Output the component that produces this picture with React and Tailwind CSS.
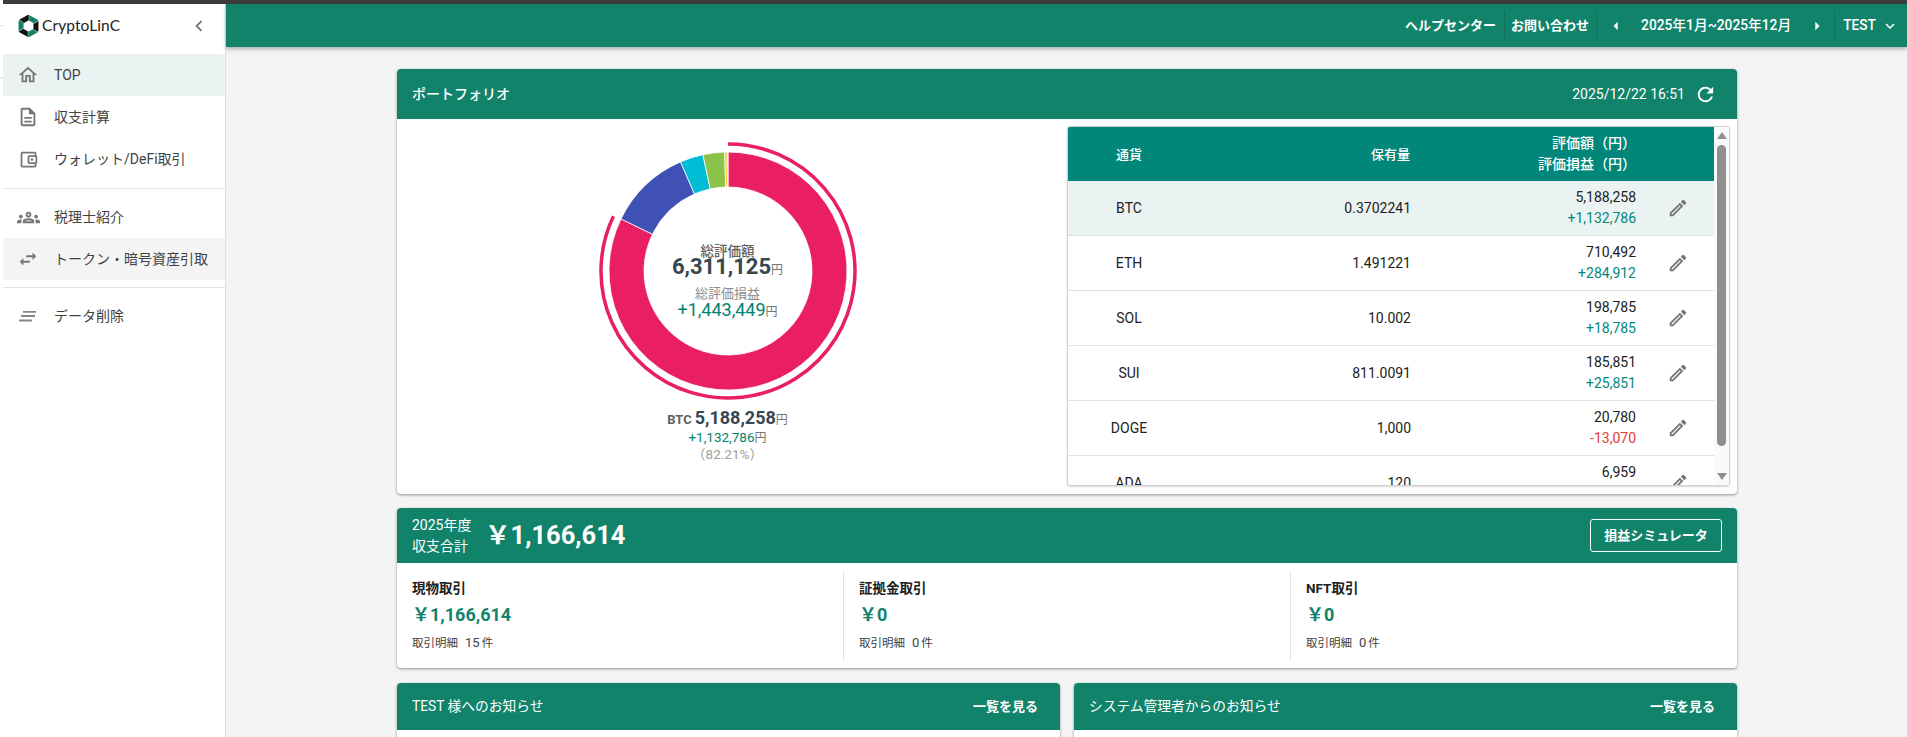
import React from "react";
import {
  MdOutlineHome, MdOutlineDescription, MdOutlineAccountBalanceWallet, MdOutlineGroups,
  MdSwapHoriz, MdOutlineEdit, MdRefresh, MdExpandMore, MdArrowLeft, MdArrowRight, MdChevronLeft,
} from "react-icons/md";

const FONT = "font-['Roboto','Noto_Sans_CJK_JP',sans-serif]";

function Logo() {
  const blade = "12.7,0.4 22,5.8 22,6.6 17.4,9.2 12,6 12.7,5.4";
  const blades = [
    [0, "#12836b"], [60, "#111111"], [120, "#12836b"],
    [180, "#111111"], [240, "#12836b"], [300, "#111111"],
  ];
  return (
    <svg width="23" height="24" viewBox="0 0 24 24" className="shrink-0">
      {blades.map(([r, c]) => (
        <polygon key={r} points={blade} fill={c} transform={`rotate(${r} 12 12)`} />
      ))}
    </svg>
  );
}

function SlantLines() {
  return (
    <svg width="24" height="24" viewBox="0 0 24 24" fill="none" stroke="#858585" strokeWidth="1.8">
      <path d="M7 7.8H20M5 12H19M3 16.5H16" />
    </svg>
  );
}

function NavItem({ icon, label, bg = "" }) {
  return (
    <div className={`flex h-[42px] items-center pl-[13px] text-[14px] text-[#424242] ${bg}`}>
      <span className="flex w-6 justify-center text-[#757575]">{icon}</span>
      <span className="ml-[14px] whitespace-nowrap">{label}</span>
    </div>
  );
}

function Sidebar() {
  return (
    <aside className="flex w-[223px] shrink-0 flex-col border-r border-[#e0e0e0] bg-white">
      <div className="flex h-[50px] items-center pb-[7px] pl-[14px] pr-[15px]">
        <Logo />
        <span className="ml-[2px] font-['Lato',sans-serif] text-[15.5px] tracking-[0.1px] text-[#222]">CryptoLinC</span>
        <MdChevronLeft className="ml-auto text-[#757575]" size={22} />
      </div>
      <NavItem icon={<MdOutlineHome size={22} />} label="TOP" bg="bg-[#ebf3f2]" />
      <NavItem icon={<MdOutlineDescription size={22} />} label="収支計算" />
      <NavItem icon={<MdOutlineAccountBalanceWallet size={21} />} label="ウォレット/DeFi取引" />
      <div className="mb-[7px] mt-2 h-px bg-[#e0e0e0]" />
      <NavItem icon={<MdOutlineGroups size={23} />} label="税理士紹介" />
      <NavItem icon={<MdSwapHoriz size={22} />} label="トークン・暗号資産引取" bg="bg-[#f4f4f4]" />
      <div className="mb-[7px] mt-[7px] h-px bg-[#e0e0e0]" />
      <NavItem icon={<SlantLines />} label="データ削除" />
    </aside>
  );
}

function HeaderDivider() {
  return <div className="h-[29px] w-px bg-[#0f705c]" />;
}

function TopBar() {
  return (
    <header className="relative z-10 flex h-[43px] shrink-0 items-center justify-end bg-[#12836b] text-[13px] text-white shadow-[0_2px_4px_rgba(0,0,0,0.3)]">
      <span className="mr-2 whitespace-nowrap font-bold">ヘルプセンター</span>
      <HeaderDivider />
      <span className="ml-[6px] mr-[7px] whitespace-nowrap font-bold">お問い合わせ</span>
      <HeaderDivider />
      <MdArrowLeft size={20} className="ml-[9px]" />
      <span className="ml-[15px] whitespace-nowrap text-[13.75px] font-medium">2025年1月~2025年12月</span>
      <MdArrowRight size={20} className="ml-[16px]" />
      <div className="ml-[7px]"><HeaderDivider /></div>
      <span className="ml-2 text-[13.75px] font-medium">TEST</span>
      <MdExpandMore size={18} className="ml-[5px] mr-[8px]" />
    </header>
  );
}

const segs = [
  ["#e91e63", 82.21], ["#3f51b5", 11.26], ["#00bcd4", 3.15], ["#8bc34a", 2.94],
  ["#ffc107", 0.33], ["#ff9800", 0.11],
];

function pt(r, pct) {
  const a = (pct / 100) * 2 * Math.PI;
  return [130 + r * Math.sin(a), 130 - r * Math.cos(a)];
}

function Donut() {
  let acc = 0;
  const R = 119, r = 84;
  const paths = segs.map(([c, v]) => {
    const s = acc, e = acc + v;
    acc = e;
    const large = v > 50 ? 1 : 0;
    const [x1, y1] = pt(R, s), [x2, y2] = pt(R, e), [x3, y3] = pt(r, e), [x4, y4] = pt(r, s);
    return (
      <path key={c} fill={c} stroke="#fff" strokeWidth="0.8"
        d={`M${x1} ${y1}A${R} ${R} 0 ${large} 1 ${x2} ${y2}L${x3} ${y3}A${r} ${r} 0 ${large} 0 ${x4} ${y4}Z`} />
    );
  });
  const [ax, ay] = pt(127, 82.1);
  const [bx, by] = pt(127, 0);
  return (
    <div className="relative h-[260px] w-[260px]">
      <svg width="260" height="260" viewBox="0 0 260 260">
        {paths}
        <path d={`M${bx} ${by}A127 127 0 1 1 ${ax} ${ay}`} fill="none" stroke="#e91e63" strokeWidth="3.5" />
      </svg>
      <div className="absolute inset-0 flex flex-col items-center pt-[103px] whitespace-nowrap">
        <div className="text-[13.5px] font-medium leading-[14px] text-[#616161]">総評価額</div>
        <div className="flex items-baseline leading-[18px]">
          <span className="text-[22px] font-bold text-[#37474f]">6,311,125</span>
          <span className="text-[12px] text-[#757575]">円</span>
        </div>
        <div className="mt-[7px] text-[13px] leading-[15px] text-[#8d8d8d]">総評価損益</div>
        <div className="flex items-baseline leading-[18px]">
          <span className="text-[18px] text-[#00846f]">+1,443,449</span>
          <span className="text-[12px] text-[#757575]">円</span>
        </div>
      </div>
    </div>
  );
}

const rows = [
  ["BTC", "0.3702241", "5,188,258", "+1,132,786", true],
  ["ETH", "1.491221", "710,492", "+284,912", true],
  ["SOL", "10.002", "198,785", "+18,785", true],
  ["SUI", "811.0091", "185,851", "+25,851", true],
  ["DOGE", "1,000", "20,780", "-13,070", false],
  ["ADA", "120", "6,959", "+1,959", true],
];

function HoldingsTable() {
  return (
    <div className="flex h-[360px] w-[663px] overflow-hidden rounded-[3px] border border-[#d0d0d0] shadow-[0_1px_2px_rgba(0,0,0,0.15)]">
      <div className="w-[646px] shrink-0 text-[14px] text-[#212121]">
        <div className="flex h-[54px] items-center bg-[#01877a] font-medium leading-[21px] text-white">
          <div className="w-[122px] text-center text-[13px]">通貨</div>
          <div className="w-[220px] text-right text-[13px]">保有量</div>
          <div className="w-[226px] text-right">評価額（円）<br />評価損益（円）</div>
        </div>
        {rows.map(([c, q, v, p, up], i) => (
          <div key={c} className={`flex h-[55px] shrink-0 items-center border-b border-[#e0e0e0] leading-[21px] ${i === 0 ? "bg-[#ebf3f2]" : ""}`}>
            <div className="w-[122px] text-center">{c}</div>
            <div className="w-[221px] text-right">{q}</div>
            <div className="w-[225px] text-right">
              <div>{v}</div>
              <div className={up ? "text-[#00897b]" : "text-[#e53935]"}>{p}</div>
            </div>
            <div className="flex w-[78px] justify-center pl-[6px] text-[#757575]">
              <MdOutlineEdit size={22} />
            </div>
          </div>
        ))}
      </div>
      <div className="flex w-[16px] flex-col items-center bg-[#fafafa]">
        <div className="mt-[5px] h-0 w-0 border-x-[5px] border-b-[7px] border-x-transparent border-b-[#8f8f8f]" />
        <div className="mt-[6px] h-[301px] w-[9px] rounded-full bg-[#8f8f8f]" />
        <div className="mt-[27px] h-0 w-0 border-x-[5px] border-t-[7px] border-x-transparent border-t-[#8f8f8f]" />
      </div>
    </div>
  );
}

function Portfolio() {
  return (
    <section className="h-[425px] overflow-hidden rounded-[4px] bg-white shadow-[0_1px_3px_rgba(0,0,0,0.4)]">
      <div className="flex h-[50px] items-center justify-between bg-[#12836b] pl-[15px] pr-[20px] text-white">
        <span className="text-[14px] font-medium">ポートフォリオ</span>
        <div className="flex items-center">
          <span className="text-[14px]">2025/12/22 16:51</span>
          <MdRefresh size={23} className="ml-[9px]" />
        </div>
      </div>
      <div className="flex">
        <div className="flex w-[661px] flex-col items-center pt-[22px]">
          <Donut />
          <div className="mt-[8px] flex flex-col items-center whitespace-nowrap">
            <div className="flex items-baseline leading-[18px]">
              <span className="mr-[3px] text-[13px] font-bold text-[#616161]">BTC</span>
              <span className="text-[18px] font-bold text-[#37474f]">5,188,258</span>
              <span className="text-[12px] text-[#757575]">円</span>
            </div>
            <div className="flex items-baseline leading-[16px]">
              <span className="text-[13.5px] text-[#00846f]">+1,132,786</span>
              <span className="text-[12px] text-[#757575]">円</span>
            </div>
            <div className="text-[13.5px] leading-[17px] text-[#9e9e9e]">（82.21%）</div>
          </div>
        </div>
        <div className="ml-[9px] mt-[7px]"><HoldingsTable /></div>
      </div>
    </section>
  );
}

function Stat({ title, amount, count, border }) {
  return (
    <div className={`flex h-[90px] flex-1 flex-col pl-[15px] ${border ? "border-r border-[#e0e0e0]" : ""}`}>
      <div className="mt-[8px] text-[13.5px] font-bold leading-[18px] text-[#212121]">{title}</div>
      <div className="mt-[7px] text-[18px] font-bold leading-[22px] text-[#12836b]">￥{amount}</div>
      <div className="mt-[8px] flex items-baseline text-[11.5px] leading-[18px] text-[#424242]">
        取引明細
        <span className="ml-[7px] text-[13px]">{count}</span>
        <span className="ml-[2px]">件</span>
      </div>
    </div>
  );
}

function Summary() {
  return (
    <section className="mt-[14px] h-[160px] overflow-hidden rounded-[4px] bg-white shadow-[0_1px_3px_rgba(0,0,0,0.4)]">
      <div className="flex h-[55px] items-center bg-[#12836b] pl-[15px] pr-[15px] text-white">
        <div className="w-[62px] text-[14px] leading-[21px]">2025年度<br />収支合計</div>
        <div className="ml-[11px] text-[25.5px] font-bold">￥1,166,614</div>
        <div className="ml-auto flex h-[33px] w-[132px] items-center justify-center rounded-[3px] border border-white text-[13px] font-bold">損益シミュレータ</div>
      </div>
      <div className="mt-[8px] flex">
        <div className="w-[447px]"><Stat title="現物取引" amount="1,166,614" count="15" border /></div>
        <div className="w-[447px]"><Stat title="証拠金取引" amount="0" count="0" border /></div>
        <div className="flex-1"><Stat title="NFT取引" amount="0" count="0" /></div>
      </div>
    </section>
  );
}

function Notice({ title }) {
  return (
    <section className="h-[100px] flex-1 overflow-hidden rounded-[4px] bg-white shadow-[0_1px_3px_rgba(0,0,0,0.4)]">
      <div className="flex h-[47px] items-center justify-between bg-[#12836b] px-[15px] text-white">
        <span className="text-[13.75px]">{title}</span>
        <span className="pr-[7px] text-[13px] font-bold">一覧を見る</span>
      </div>
    </section>
  );
}

export default function App() {
  return (
    <div className={`flex h-[737px] w-[1907px] overflow-hidden bg-white ${FONT}`}>
      <div className="flex w-[3px] shrink-0 flex-col bg-white">
        <div className="mt-[25px] h-px bg-[#dddddd]" />
        <div className="mt-[51px] h-px bg-[#dddddd]" />
      </div>
      <div className="flex min-w-0 flex-1 flex-col">
        <div className="h-1 shrink-0 bg-[#3c3c3c]" />
        <div className="flex min-h-0 flex-1">
          <Sidebar />
          <div className="flex min-w-0 flex-1 flex-col bg-[#f4f4f4]">
            <TopBar />
            <main className="min-h-0 flex-1 overflow-hidden pl-[171px] pt-[22px]">
              <div className="w-[1340px]">
                <Portfolio />
                <Summary />
                <div className="mt-[15px] flex gap-[14px]">
                  <Notice title="TEST 様へのお知らせ" />
                  <Notice title="システム管理者からのお知らせ" />
                </div>
              </div>
            </main>
          </div>
        </div>
      </div>
    </div>
  );
}
